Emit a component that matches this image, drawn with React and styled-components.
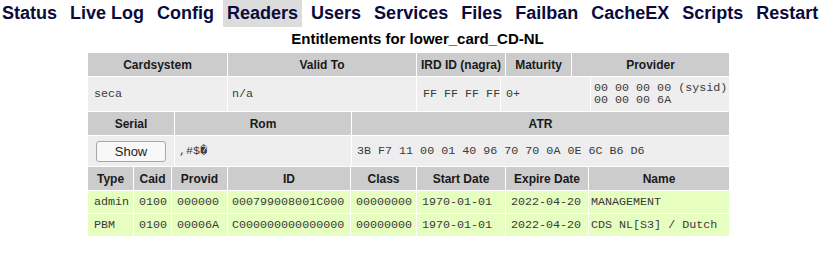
import React from "react";
import styled, { createGlobalStyle } from "styled-components";

const Global = createGlobalStyle`
  html, body { margin: 0; padding: 0; background: #fff; }
  body { font-family: "Liberation Sans", Arial, sans-serif; }
`;

const Menu = styled.nav`
  display: flex;
  gap: 5px;
  margin-left: -2px;
  height: 27px;
`;

const MenuItem = styled.a`
  display: block;
  padding: 0 4px;
  height: 27px;
  line-height: 27px;
  font-size: 18px;
  font-weight: bold;
  color: #0a0a3c;
  text-decoration: none;
  background: ${(p) => (p.$active ? "#dcdcdc" : "transparent")};
`;

const Title = styled.div`
  text-align: center;
  font-size: 15px;
  font-weight: bold;
  color: #000;
  margin-top: 3px;
  height: 23px;
  line-height: 18px;
`;

const Table = styled.div`
  display: flex;
  flex-direction: column;
  gap: 1px;
  width: 641px;
  margin-left: 88px;
`;

const Row = styled.div`
  display: grid;
  grid-template-columns: ${(p) => p.$cols};
  column-gap: 1px;
  height: ${(p) => p.$h}px;
`;

const Head = styled.div`
  background: #cccccc;
  display: flex;
  align-items: center;
  justify-content: center;
  font-size: 12px;
  font-weight: bold;
  color: #1a1a1a;
  white-space: nowrap;
`;

const Cell = styled.div`
  background: ${(p) => (p.$green ? "#e6febf" : "#eeeeee")};
  display: flex;
  align-items: center;
  justify-content: ${(p) => (p.$center ? "center" : "flex-start")};
  padding: 0 ${(p) => p.$pad ?? 5}px;
  font-family: "Liberation Mono", "Courier New", "DejaVu Sans Mono", monospace;
  font-size: 11.7px;
  line-height: 12px;
  color: #3a3a3a;
  white-space: pre;
  overflow: hidden;
`;

const Button = styled.button`
  width: 70px;
  height: 21px;
  padding: 0;
  background: #f8f8f8;
  border: 1px solid #a8a8a8;
  border-radius: 3px;
  font-family: "Liberation Sans", Arial, sans-serif;
  font-size: 13px;
  color: #222;
`;

const menu = ["Status", "Live Log", "Config", "Readers", "Users", "Services", "Files", "Failban", "CacheEX", "Scripts", "Restart"];

const entCols = "45px 37px 55px 122px 65px 88px 82px 140px";
const entPad = [6, 5, 5, 4, 5, 5, 5, 2];
const ents = [
  ["admin", "0100", "000000", "000799008001C000", "00000000", "1970-01-01", "2022-04-20", "MANAGEMENT"],
  ["PBM", "0100", "00006A", "C000000000000000", "00000000", "1970-01-01", "2022-04-20", "CDS NL[S3] / Dutch"],
];

export default function App() {
  return (
    <>
      <Global />
      <Menu>
        {menu.map((m) => (
          <MenuItem key={m} $active={m === "Readers"}>{m}</MenuItem>
        ))}
      </Menu>
      <Title>Entitlements for lower_card_CD-NL</Title>
      <Table>
        <Row $cols="139px 188px 88px 65px 157px" $h={23}>
          <Head>Cardsystem</Head>
          <Head>Valid To</Head>
          <Head>IRD ID (nagra)</Head>
          <Head>Maturity</Head>
          <Head>Provider</Head>
        </Row>
        <Row $cols="139px 188px 83px 89px 138px" $h={34}>
          <Cell $pad={6}>seca</Cell>
          <Cell $pad={4}>n/a</Cell>
          <Cell $pad={6}>FF FF FF FF</Cell>
          <Cell $pad={5}>0+</Cell>
          <Cell $pad={3}>{"00 00 00 00 (sysid)\n00 00 00 6A"}</Cell>
        </Row>
        <Row $cols="86px 176px 377px" $h={23}>
          <Head>Serial</Head>
          <Head>Rom</Head>
          <Head>ATR</Head>
        </Row>
        <Row $cols="86px 176px 377px" $h={30}>
          <Cell $center><Button>Show</Button></Cell>
          <Cell $pad={4}>{",#$\uFFFD"}</Cell>
          <Cell $pad={5}>3B F7 11 00 01 40 96 70 70 0A 0E 6C B6 D6</Cell>
        </Row>
        <Row $cols={entCols} $h={23}>
          {["Type", "Caid", "Provid", "ID", "Class", "Start Date", "Expire Date", "Name"].map((h) => (
            <Head key={h}>{h}</Head>
          ))}
        </Row>
        {ents.map((r, i) => (
          <Row key={i} $cols={entCols} $h={22}>
            {r.map((c, j) => (
              <Cell key={j} $green $pad={entPad[j]}>{c}</Cell>
            ))}
          </Row>
        ))}
      </Table>
    </>
  );
}
